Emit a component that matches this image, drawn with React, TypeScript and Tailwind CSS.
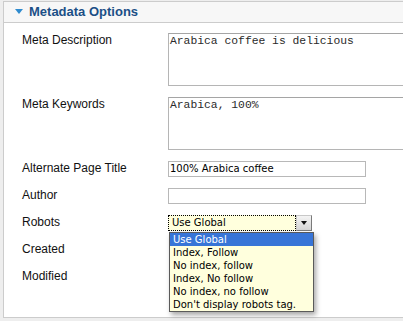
const robotsOptions = [
  'Use Global',
  'Index, Follow',
  'No index, follow',
  'Index, No follow',
  'No index, no follow',
  "Don't display robots tag.",
];

const labelClass = 'w-[146px] shrink-0 text-[12px] leading-[14px] text-[#111]';
const uiFont = { fontFamily: '"DejaVu Sans", sans-serif' };

const Row = ({ label, children }: { label: string; children?: React.ReactNode }) => (
  <div className="flex items-start">
    <div className={labelClass}>{label}</div>
    {children}
  </div>
);

const App = () => {
  return (
    <div
      className="w-[403px] h-[321px] overflow-hidden bg-[#eeeeee] pl-[3px] pt-[1px]"
      style={{ fontFamily: '"Liberation Sans", Arial, sans-serif' }}
    >
      <div className="h-[317px] border-l border-t border-b border-[#cccccc] bg-white">
        {/* header */}
        <div className="flex h-[21px] items-center border-b border-[#cccccc] bg-[#f7f7f7] pl-[11px]">
          <svg width="8" height="5" viewBox="0 0 8 5" className="mr-[6px] mt-[-1px]">
            <path d="M0 0 L8 0 L4 5 Z" fill="#2f8bcf" />
          </svg>
          <span className="text-[13px] font-bold leading-[20px] text-[#1b4f86]">Metadata Options</span>
        </div>

        <div className="flex flex-col gap-[11px] pl-[18px] pt-[10px]">
          <Row label="Meta Description">
            <div className="h-[53px] w-[260px] shrink-0 border border-[#b5b5b5] border-t-[#a5a5a5] px-[1px] pt-[1px] text-[11.35px] leading-[13px] text-[#2a2a2a]" style={{ fontFamily: '"Liberation Mono", monospace' }}>
              Arabica coffee is delicious
            </div>
          </Row>
          <Row label="Meta Keywords">
            <div className="h-[53px] w-[260px] shrink-0 border border-[#b5b5b5] border-t-[#a5a5a5] px-[1px] pt-[1px] text-[11.35px] leading-[13px] text-[#2a2a2a]" style={{ fontFamily: '"Liberation Mono", monospace' }}>
              Arabica, 100%
            </div>
          </Row>
          <Row label="Alternate Page Title">
            <div className="h-[16px] w-[198px] border border-[#b8b8b8] pl-[1px] text-[10px] leading-[14px] text-black" style={uiFont}>
              100% Arabica coffee
            </div>
          </Row>
          <Row label="Author">
            <div className="h-[16px] w-[198px] border border-[#b8b8b8]" />
          </Row>
          <Row label="Robots">
            <div className="relative z-10 flex h-[16px] w-[144px]" style={uiFont}>
              <div className="flex-1 border border-dotted border-black bg-[#ffffdd] pl-[3px] text-[10px] leading-[14px] text-black">
                Use Global
              </div>
              <div className="flex w-[16px] items-center justify-center border-t border-l border-[#c8c8c8] border-r-[#7a7a7a] border-b-[#7a7a7a] border-r border-b bg-gradient-to-b from-[#f4f4f4] to-[#d4d4d4]">
                <svg width="6" height="4" viewBox="0 0 6 4">
                  <path d="M0 0 L6 0 L3 4 Z" fill="#111" />
                </svg>
              </div>
              <div className="absolute left-[1px] top-[17px] w-[145px] border border-[#5a5a5a] bg-[#ffffdd] shadow-[2px_3px_5px_rgba(0,0,0,0.35)]">
                {robotsOptions.map((opt, i) => (
                  <div
                    key={opt}
                    className={`h-[13px] pl-[3px] text-[10px] leading-[13px] ${i === 0 ? 'bg-[#3875d7] text-white' : 'text-black'}`}
                  >
                    {opt}
                  </div>
                ))}
              </div>
            </div>
          </Row>
          <Row label="Created">
            <div className="h-[16px]" />
          </Row>
          <Row label="Modified">
            <div className="h-[16px]" />
          </Row>
        </div>
      </div>
    </div>
  );
};

export default App;
